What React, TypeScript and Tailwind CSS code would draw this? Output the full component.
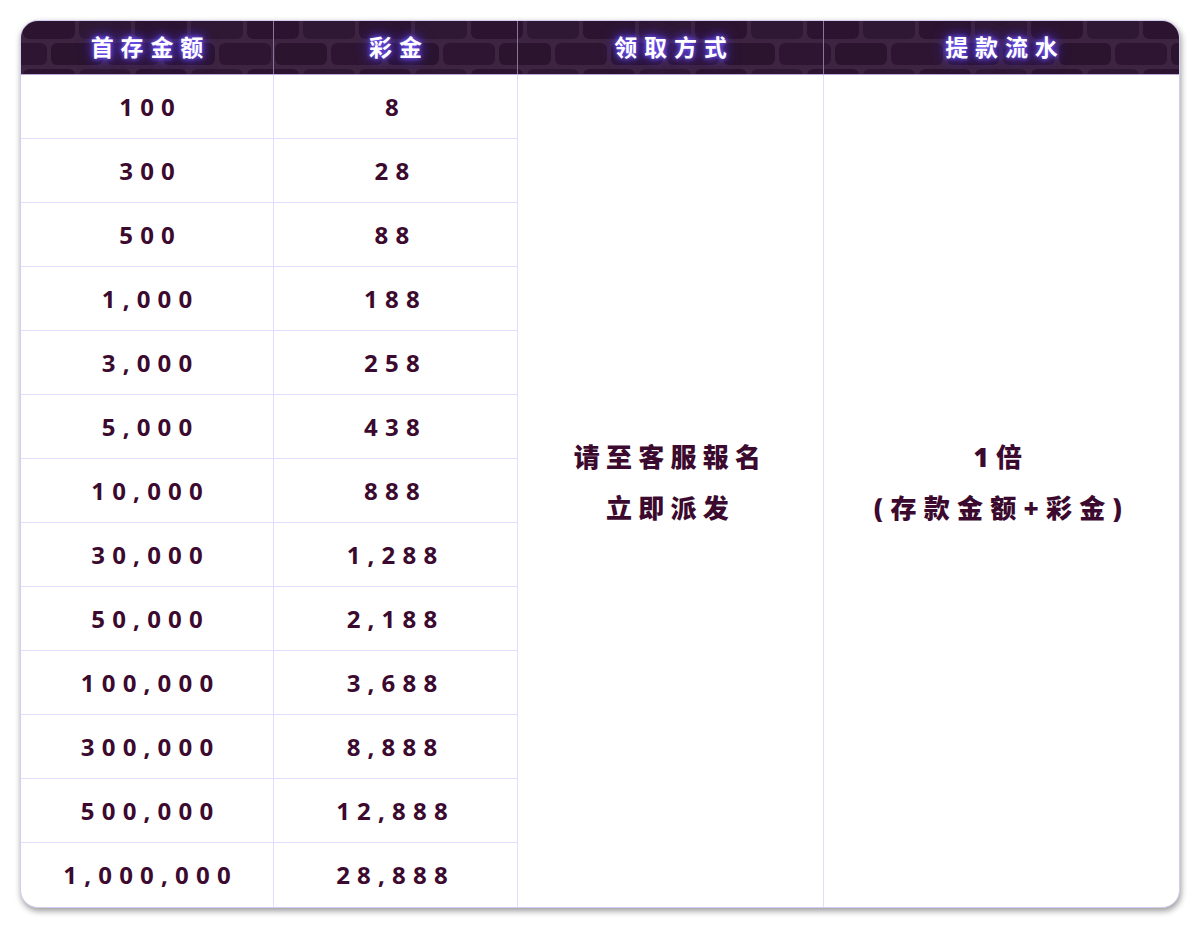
const rows: [string, string][] = [
  ["100", "8"],
  ["300", "28"],
  ["500", "88"],
  ["1,000", "188"],
  ["3,000", "258"],
  ["5,000", "438"],
  ["10,000", "888"],
  ["30,000", "1,288"],
  ["50,000", "2,188"],
  ["100,000", "3,688"],
  ["300,000", "8,888"],
  ["500,000", "12,888"],
  ["1,000,000", "28,888"],
];

const headers = ["首存金额", "彩金", "领取方式", "提款流水"];

function BrickBackground() {
  return (
    <svg className="absolute inset-0 h-full w-full" preserveAspectRatio="none">
      <defs>
        <pattern id="bricks" x="0" y="-6" width="112" height="52" patternUnits="userSpaceOnUse">
          <rect width="112" height="52" fill="#432a46" />
          <rect x="2" y="2" width="52" height="22" rx="6" fill="#2c1530" />
          <rect x="58" y="2" width="52" height="22" rx="6" fill="#311a35" />
          <rect x="-26" y="28" width="52" height="22" rx="6" fill="#2f1733" />
          <rect x="30" y="28" width="52" height="22" rx="6" fill="#2a142e" />
          <rect x="86" y="28" width="52" height="22" rx="6" fill="#2f1733" />
        </pattern>
      </defs>
      <rect width="100%" height="100%" fill="url(#bricks)" />
      <rect width="100%" height="100%" fill="#2b1430" opacity="0.25" />
    </svg>
  );
}

export default function App() {
  const font = { fontFamily: '"Open Sans", "Noto Sans CJK SC", sans-serif' };
  return (
    <div className="min-h-[932px] w-[1200px] bg-white pt-[20px] pl-[20px]" style={font}>
      <div className="w-[1160px] overflow-hidden rounded-[18px] border border-[#d4cdf3] bg-white shadow-[1px_3px_6px_rgba(0,0,0,0.4)]">
        <div className="relative grid h-[54px] grid-cols-[253px_244px_306px_1fr] border-b border-[#b9a8d8]">
          <BrickBackground />
          {headers.map((h, i) => (
            <div
              key={h}
              className={`relative flex items-center justify-center pl-[0.3em] text-[23px] font-bold tracking-[0.3em] text-white [text-shadow:0_0_4px_#7a5cff,0_0_10px_#5a3ce8,0_0_16px_#4a2fd0] ${
                i < 3 ? "border-r border-[#8c7598]" : ""
              }`}
            >
              {h}
            </div>
          ))}
        </div>
        <div className="grid grid-cols-[253px_244px_306px_1fr] grid-rows-[repeat(13,64px)] text-[#3b0a2e]">
          {rows.map(([a, b], i) => (
            <div key={a} className="contents">
              <div
                className={`col-start-1 flex items-center justify-center border-r border-[#e2ddff] pl-[0.3em] text-[24px] font-bold tracking-[0.3em] ${
                  i < 12 ? "border-b" : ""
                }`}
                style={{ gridRow: i + 1 }}
              >
                {a}
              </div>
              <div
                className={`col-start-2 flex items-center justify-center border-r border-[#e2ddff] text-[24px] font-bold tracking-[0.3em] ${
                  i < 12 ? "border-b" : ""
                }`}
                style={{ gridRow: i + 1 }}
              >
                {b}
              </div>
            </div>
          ))}
          <div className="col-start-3 row-span-13 row-start-1 flex flex-col items-center justify-center border-r border-[#e2ddff] pb-[16px] text-[26px] font-black leading-[51px] tracking-[0.24em]">
            <div>请至客服報名</div>
            <div>立即派发</div>
          </div>
          <div className="col-start-4 row-span-13 row-start-1 flex flex-col items-center justify-center pb-[16px] text-[26px] font-black leading-[51px] tracking-[0.28em]">
            <div>1倍</div>
            <div>(存款金额+彩金)</div>
          </div>
        </div>
      </div>
    </div>
  );
}
